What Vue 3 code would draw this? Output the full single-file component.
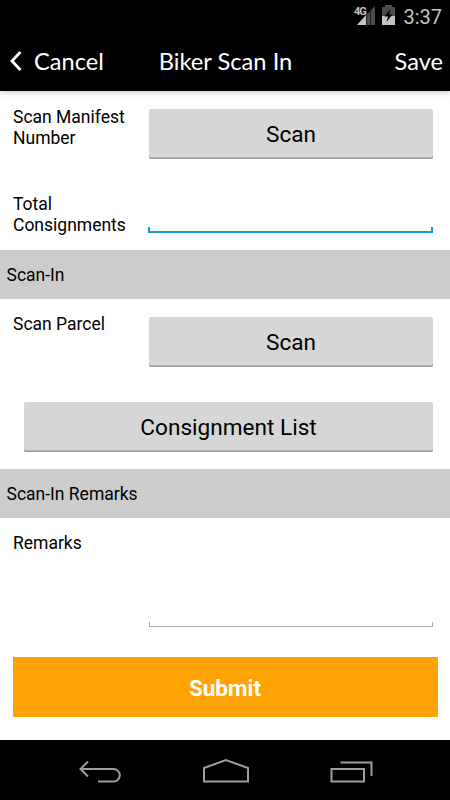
<template>
  <div class="screen">
    <div class="status-bar">
      <svg class="signal" width="22" height="24" viewBox="0 0 22 24">
        <path d="M21 5V24H3Z" fill="#4b4b4b" />
        <path d="M12 14V24H3Z" fill="#c4c4c4" />
        <path d="M12.5 12V24M16.5 8V24" stroke="#222" stroke-width="1" />
        <text x="0" y="13.5" class="network">4G</text>
      </svg>
      <svg class="battery" width="13" height="20" viewBox="0 0 13 20">
        <path d="M3 0H10V2H13V11H0V2H3Z" fill="#4b4b4b" />
        <path d="M0 11H13V20H0Z" fill="#c4c4c4" />
        <path d="M8.5 4L2.5 11.5H6L4.5 17L10.5 9.5H7Z" fill="#000" />
      </svg>
      <span class="clock">3:37</span>
    </div>

    <header class="header">
      <button type="button" class="header-btn cancel">
        <svg width="12" height="20" viewBox="0 0 12 20">
          <path d="M10.5 1L2 10L10.5 19" fill="none" stroke="#fff" stroke-width="2.8" />
        </svg>
        <span>Cancel</span>
      </button>
      <h1 class="title">Biker Scan In</h1>
      <button type="button" class="header-btn save">Save</button>
    </header>

    <form class="form" @submit.prevent>
      <div class="form-row manifest">
        <label class="form-label">Scan Manifest Number</label>
        <button type="button" class="btn">Scan</button>
      </div>
      <div class="form-row total">
        <label class="form-label">Total Consignments</label>
        <div class="field focused">
          <input v-model="form.total" type="text" class="form-input" />
        </div>
      </div>

      <h2 class="section">Scan-In</h2>
      <div class="form-row parcel">
        <label class="form-label">Scan Parcel</label>
        <button type="button" class="btn">Scan</button>
      </div>
      <div class="list-row">
        <button type="button" class="btn">Consignment List</button>
      </div>

      <h2 class="section">Scan-In Remarks</h2>
      <div class="form-row remarks">
        <label class="form-label">Remarks</label>
        <div class="field">
          <input v-model="form.remarks" type="text" class="form-input" />
        </div>
      </div>
      <button type="submit" class="submit">Submit</button>
    </form>

    <nav class="nav-bar">
      <svg width="44" height="26" viewBox="0 0 44 26">
        <path d="M10 3.5L2.5 11L10 18.5M2.5 11H35.5A6.3 6.3 0 0 1 35.5 23.6H20" />
      </svg>
      <svg width="48" height="26" viewBox="0 0 48 26">
        <path d="M2 23.6V10L24 2L46 10V23.6Z" />
      </svg>
      <svg width="44" height="26" viewBox="0 0 44 26">
        <path d="M1.5 11H34V23.6H1.5ZM10.5 4.5H41.5V18" />
      </svg>
    </nav>
  </div>
</template>

<script setup>
import { ref } from 'vue';

const form = ref({
  total: '',
  remarks: ''
});
</script>

<style>
body {
  margin: 0;
  background: #fff;
}
</style>

<style scoped>
.screen {
  display: flex;
  flex-direction: column;
  width: 450px;
  height: 800px;
  overflow: hidden;
  background: #fff;
  color: #000;
  font-family: Roboto, sans-serif;
}

button {
  padding: 0;
  border: 0;
  font-family: inherit;
}

.status-bar {
  display: flex;
  justify-content: flex-end;
  height: 32px;
  flex-shrink: 0;
  padding-right: 8px;
  box-sizing: border-box;
  background: #000;
}

.signal {
  margin: 1px 6px 0 0;
}

.network {
  fill: #c4c4c4;
  font-size: 11px;
  font-weight: 700;
  letter-spacing: -1px;
}

.battery {
  margin: 5px 8px 0 0;
}

.clock {
  color: #c4c4c4;
  font-size: 20px;
  line-height: 34px;
}

.header {
  display: grid;
  grid-template-columns: 1fr auto 1fr;
  align-items: center;
  height: 59px;
  flex-shrink: 0;
  padding: 0 7px 1px 10px;
  box-sizing: border-box;
  background: #000;
  color: #fff;
  font-family: Lato, sans-serif;
  box-shadow: 0 1px 6px rgba(0, 0, 0, 0.25);
}

.header-btn {
  background: none;
  color: #fff;
  font-family: Lato, sans-serif;
  font-size: 23.6px;
  line-height: 30px;
}

.cancel {
  display: flex;
  align-items: center;
  gap: 12px;
}

.save {
  justify-self: end;
}

.title {
  margin: 0 2px 0 0;
  font-size: 23.7px;
  font-weight: 400;
  line-height: 30px;
}

.form {
  display: flex;
  flex-direction: column;
  height: 649px;
}

.form-row {
  display: grid;
  grid-template-columns: 136px 284px;
  align-items: start;
  padding-left: 13px;
  box-sizing: border-box;
}

.form-label {
  width: 125px;
  font-size: 17.5px;
  line-height: 20.5px;
}

.btn {
  height: 50px;
  border-radius: 2px;
  background: #d6d6d6;
  box-shadow: inset 0 -1.5px 0 #999;
  color: #000;
  font-size: 22.6px;
}

.manifest {
  height: 102px;
  padding-top: 18px;
}

.manifest .form-label {
  margin-top: -2px;
}

.manifest .btn {
  padding-top: 1px;
}

.total {
  height: 57px;
}

.total .form-label {
  margin-top: 1px;
}

.field {
  height: 41px;
  border-bottom: 1px solid #aaa;
  background:
    linear-gradient(#aaa, #aaa) left bottom / 1px 4px no-repeat,
    linear-gradient(#aaa, #aaa) right bottom / 1px 4px no-repeat;
}

.field.focused {
  height: 38px;
  margin-left: -1px;
  border-bottom: 2px solid #1699d0;
  background:
    linear-gradient(#1699d0, #1699d0) left bottom / 2px 4px no-repeat,
    linear-gradient(#1699d0, #1699d0) right bottom / 2px 4px no-repeat;
}

.form-input {
  width: 100%;
  height: 100%;
  padding: 0 8px;
  border: 0;
  outline: 0;
  box-sizing: border-box;
  background: transparent;
  font-size: 18px;
}

.section {
  height: 49px;
  margin: 0;
  padding-left: 6.5px;
  background: #ccc;
  font-size: 17.5px;
  font-weight: 400;
  line-height: 51px;
}

.parcel {
  height: 103px;
  padding-top: 18px;
}

.parcel .form-label {
  margin-top: -3px;
}

.list-row {
  display: grid;
  height: 67px;
  padding: 0 17px 0 24px;
  align-items: start;
}

.remarks {
  height: 139px;
  padding-top: 15px;
}

.remarks .field {
  height: 93px;
}

.submit {
  height: 60px;
  margin: 0 12.5px;
  padding-top: 2px;
  background: #ffa305;
  color: #fff;
  font-size: 22.5px;
  font-weight: 700;
}

.nav-bar {
  display: flex;
  justify-content: space-between;
  height: 60px;
  flex-shrink: 0;
  padding: 18px 76px 0 78px;
  box-sizing: border-box;
  background: #000;
}

.nav-bar path {
  fill: none;
  stroke: #9d9d9d;
  stroke-width: 2;
}
</style>
